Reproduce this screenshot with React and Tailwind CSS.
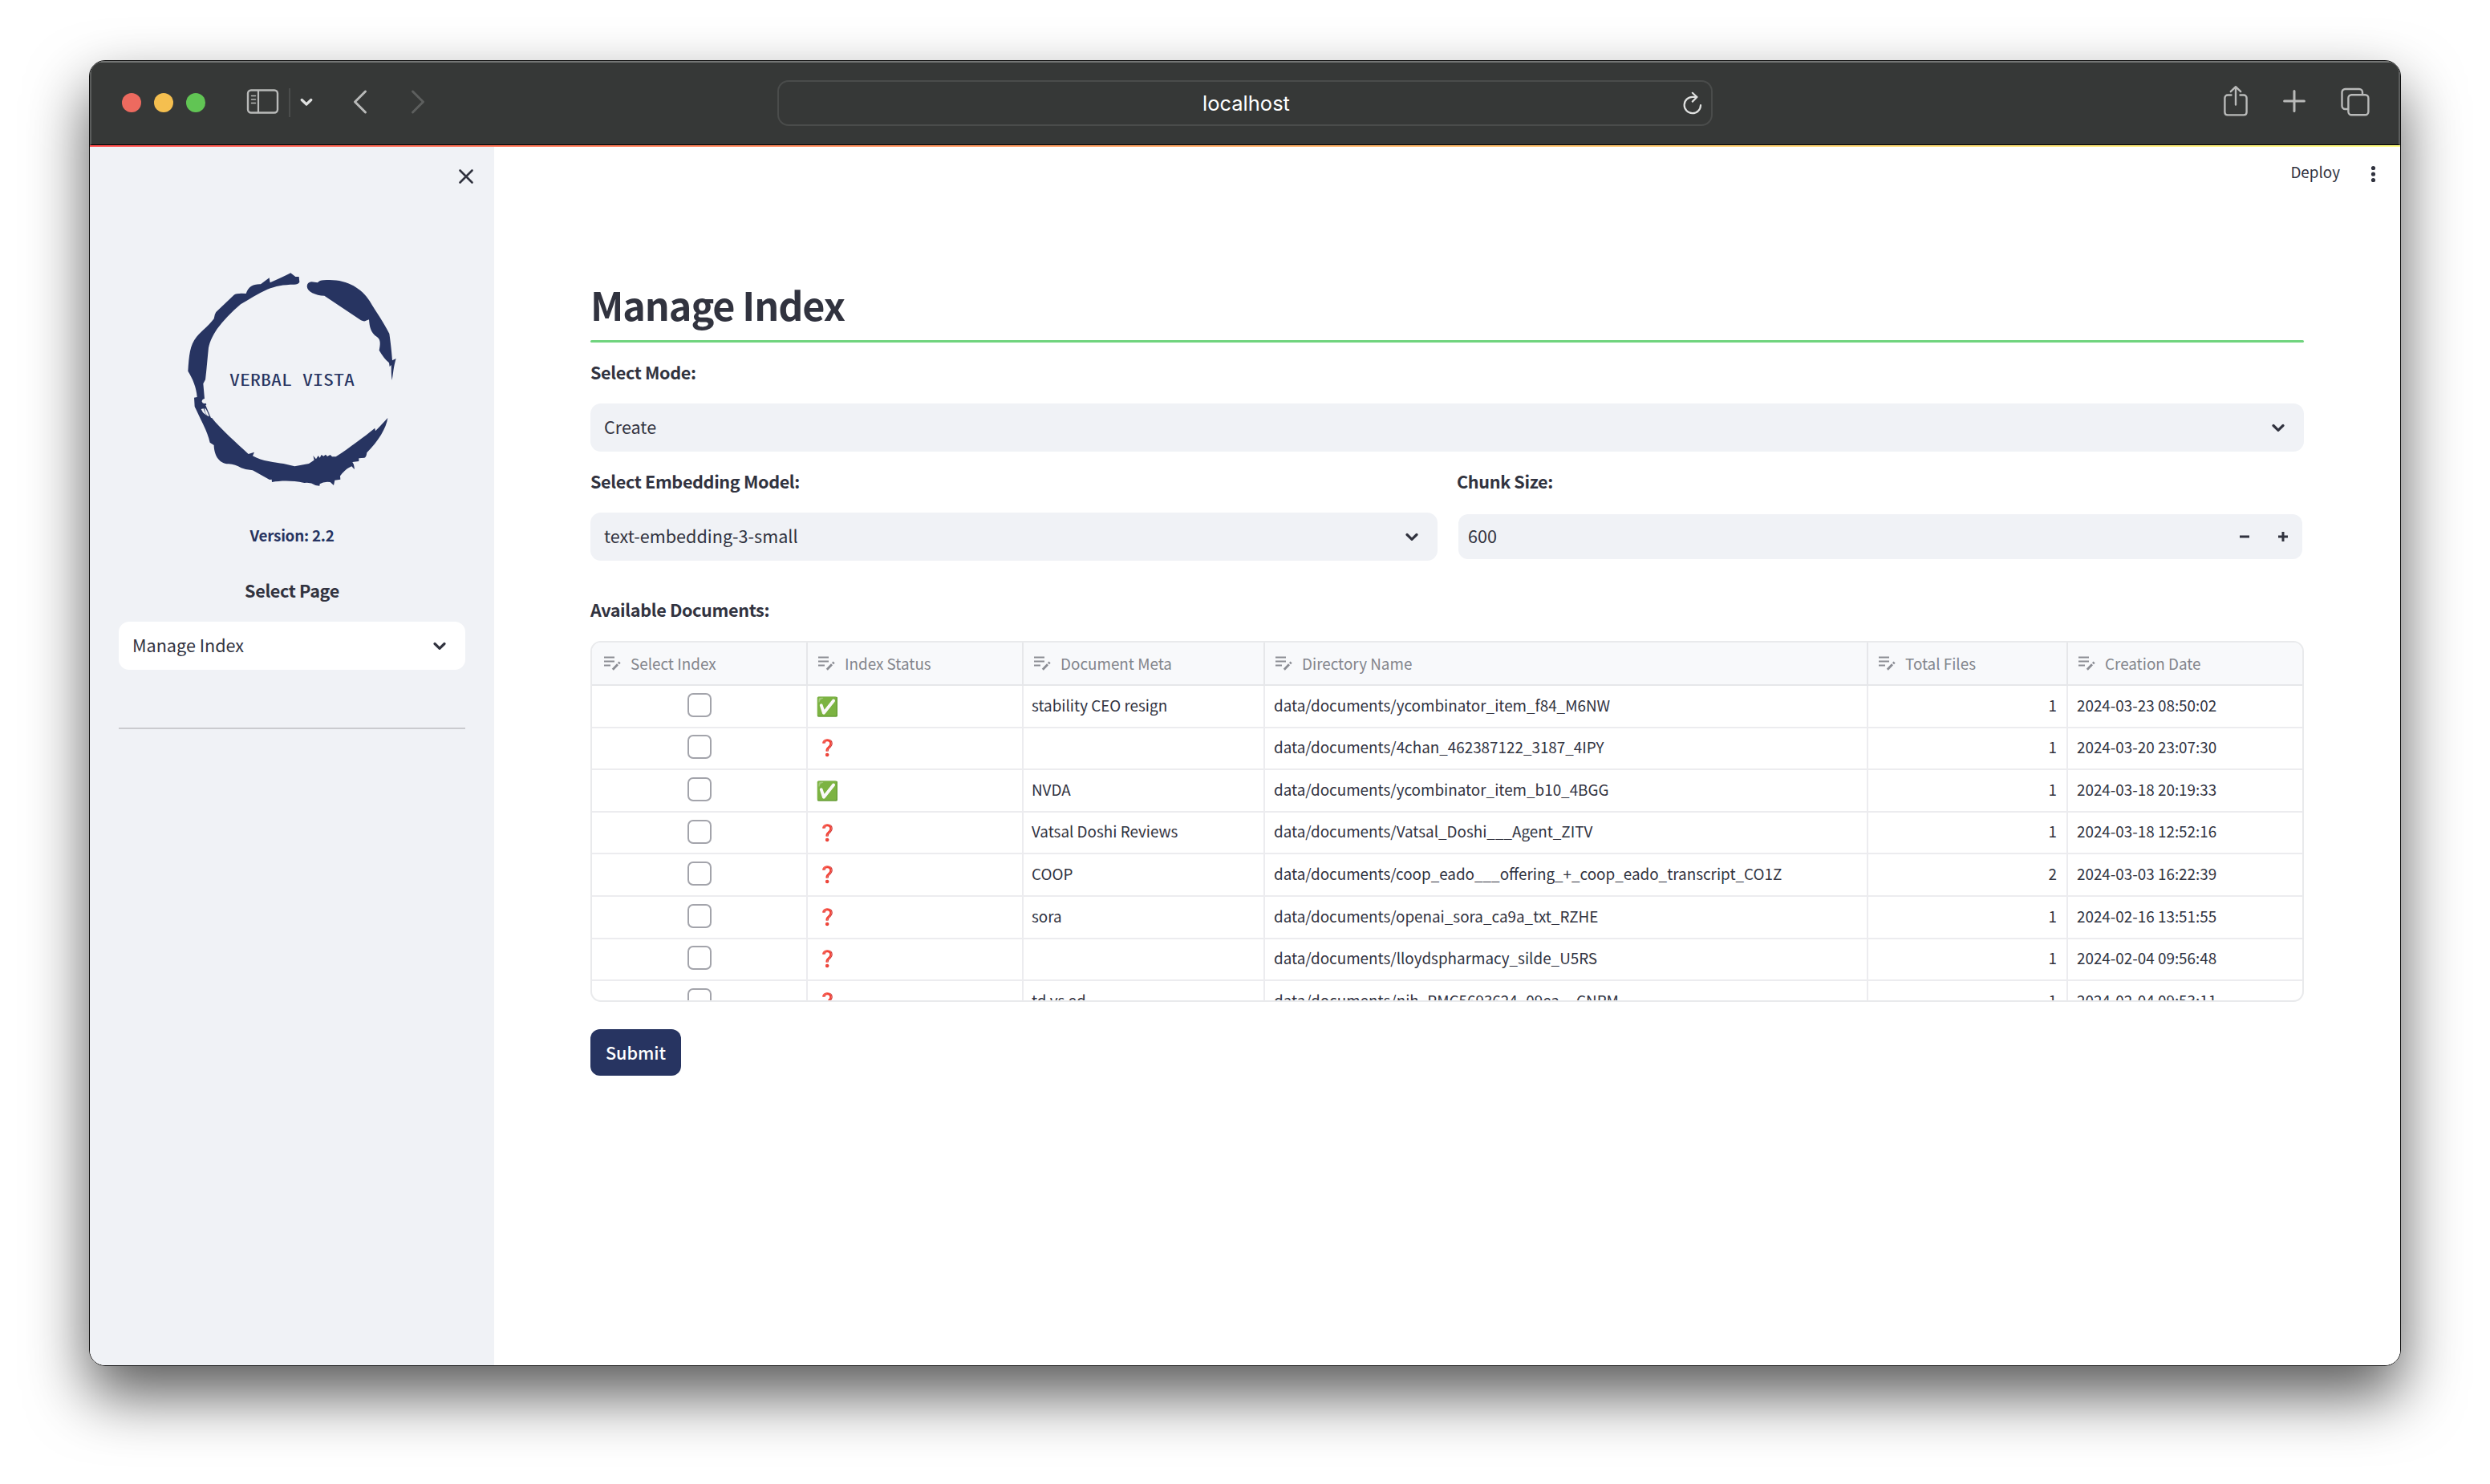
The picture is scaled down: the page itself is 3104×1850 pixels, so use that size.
const COLS =
  "grid grid-cols-[269px_269px_301px_752px_249px_minmax(0,1fr)]";

const HEADERS = [
  "Select Index",
  "Index Status",
  "Document Meta",
  "Directory Name",
  "Total Files",
  "Creation Date",
];

const ROWS = [
  ["✅", "stability CEO resign", "data/documents/ycombinator_item_f84_M6NW", 1, "2024-03-23 08:50:02"],
  ["❓", "", "data/documents/4chan_462387122_3187_4IPY", 1, "2024-03-20 23:07:30"],
  ["✅", "NVDA", "data/documents/ycombinator_item_b10_4BGG", 1, "2024-03-18 20:19:33"],
  ["❓", "Vatsal Doshi Reviews", "data/documents/Vatsal_Doshi___Agent_ZITV", 1, "2024-03-18 12:52:16"],
  ["❓", "COOP", "data/documents/coop_eado___offering_+_coop_eado_transcript_CO1Z", 2, "2024-03-03 16:22:39"],
  ["❓", "sora", "data/documents/openai_sora_ca9a_txt_RZHE", 1, "2024-02-16 13:51:55"],
  ["❓", "", "data/documents/lloydspharmacy_silde_U5RS", 1, "2024-02-04 09:56:48"],
  ["❓", "td vs ed", "data/documents/nih_PMC5693624_09ea__CNRM", 1, "2024-02-04 09:53:11"],
];

function Chevron({ className }) {
  return (
    <svg className={className} width="16" height="11" viewBox="0 0 16 11" fill="none">
      <path d="M2 2.5 8 8.3 14 2.5" stroke="#31333f" strokeWidth="3.2" strokeLinecap="round" strokeLinejoin="round" />
    </svg>
  );
}

function EditIcon() {
  return (
    <svg width="22" height="20" viewBox="0 0 22 20" fill="none" stroke="#8b8d94">
      <path d="M1 2.5h13M1 7.5h13M1 12.5h8" strokeWidth="1.8" />
      <path d="M11.8 17.8 18 11.2" strokeWidth="2.8" />
      <path d="M19 10.2 20.6 8.5" strokeWidth="2.8" />
    </svg>
  );
}

function Toolbar() {
  return (
    <header className="flex h-[105px] shrink-0 items-start border-x-2 border-t-2 border-b border-x-[#5c5e5d] border-t-[#737574] border-b-black bg-[#363837]">
      <div className="mt-[38px] ml-[38px] flex gap-4">
        <span className="size-6 rounded-full bg-[#ed6a5f]" />
        <span className="size-6 rounded-full bg-[#f5bf4f]" />
        <span className="size-6 rounded-full bg-[#61c554]" />
      </div>
      <svg className="mt-[31px] ml-[51px]" width="41" height="36" viewBox="0 0 41 36" fill="none" stroke="#b9bab9">
        <rect x="2" y="3.5" width="37" height="28" rx="4" strokeWidth="2.4" />
        <path d="M15 3.5v28" strokeWidth="2.2" />
        <path d="M6.5 10.5h5M6.5 15h5M6.5 19.5h5" strokeWidth="1.5" strokeLinecap="round" />
      </svg>
      <span className="mt-8 ml-[12px] h-9 w-[2px] bg-[#4b4d4c]" />
      <svg className="mt-[43px] ml-[12px]" width="16" height="13" viewBox="0 0 16 13" fill="none">
        <path d="M2.2 3.5 8 9 13.8 3.5" stroke="#e0e1e0" strokeWidth="3.2" strokeLinecap="round" strokeLinejoin="round" />
      </svg>
      <svg className="mt-[33px] ml-[49px]" width="20" height="32" viewBox="0 0 20 32" fill="none">
        <path d="M16.5 3 3.5 16l13 13" stroke="#b9bab9" strokeWidth="3" strokeLinecap="round" strokeLinejoin="round" />
      </svg>
      <svg className="mt-[33px] ml-[52px]" width="20" height="32" viewBox="0 0 20 32" fill="none">
        <path d="M3.5 3l13 13-13 13" stroke="#5d5f5e" strokeWidth="3" strokeLinecap="round" strokeLinejoin="round" />
      </svg>
      <div className="mt-[22px] ml-[438px] flex h-[57px] w-[1166px] items-center rounded-[14px] border-2 border-[#4a4c4b] pr-[11px] pl-[38px]">
        <span className="flex-1 text-center font-['Inter',sans-serif] text-[25.5px] leading-8 text-white">localhost</span>
        <svg width="24" height="30" viewBox="0 0 24 30" fill="none" stroke="#dfe0df" strokeWidth="2.2" strokeLinecap="round" strokeLinejoin="round">
          <path d="M22 17.2a10.2 10.2 0 1 1-10-10.4h5.2" />
          <path d="M11.8 1.8 17.4 7l-5.6 5.6" />
        </svg>
      </div>
      <svg className="mt-[27px] ml-[636px]" width="32" height="40" viewBox="0 0 32 40" fill="none" stroke="#b9bab9" strokeWidth="2.4" strokeLinecap="round" strokeLinejoin="round">
        <path d="M10.5 13.5H6A3.6 3.6 0 0 0 2.4 17v18A3.6 3.6 0 0 0 6 38.4h20a3.6 3.6 0 0 0 3.6-3.4V17a3.6 3.6 0 0 0-3.6-3.5h-4.500" />
        <path d="M16 25.500V3.500M9.800 9.200 16 3.200l6.200 6" />
      </svg>
      <svg className="mt-[34px] ml-[43px]" width="28" height="28" viewBox="0 0 28 28" fill="none">
        <path d="M14 1.600v24.800M1.600 14h24.800" stroke="#b9bab9" strokeWidth="3" strokeLinecap="round" />
      </svg>
      <svg className="mt-[30px] ml-[43px]" width="38" height="38" viewBox="0 0 38 38" fill="none" stroke="#b9bab9" strokeWidth="2.4">
        <rect x="10.400" y="10.200" width="25" height="25" rx="4" />
        <path d="M10 28H6.500a4 4 0 0 1-4-4V7a4 4 0 0 1 4-4H24a4 4 0 0 1 4 4v3" />
      </svg>
    </header>
  );
}

function Logo() {
  return (
    <svg className="mt-[137px] ml-[98px] block" width="310" height="310" viewBox="0 0 930 930" fill="#273461">
      <path d="M488 75 490 95Q485 104 470 104C430 104 400 110 370 122 335 138 300 160 270 178 235 207 205 240 182 270 162 300 151 325 149 350 145 390 142 430 138 460L130 475 135 531Q125 533 125 542 128 551 140 548L160 600C200 650 250 692 299 738L321 731 315 745C350 765 400 770 430 774L472 784 525 774Q540 765 545 760L541 744 552 757 560 744 566 752 572 741 580 746 588 740 594 747 605 741 612 748 626 748C680 712 730 675 772 641L774 652 790 635 820 603C815 640 785 690 742 733Q740 750 733 752L712 754V765L688 768Q697 780 695 795L685 784C665 792 650 810 642 820L643 833 622 836 618 855 605 843Q580 840 566 850L565 857 550 855Q530 842 508 846C460 836 420 838 387 843L386 833 378 834 315 799Q290 798 272 790 250 776 225 775C185 775 170 735 170 705L155 695C145 650 120 610 98 560L96 527 107 525C105 490 90 455 73 428 77 370 80 330 105 300 125 275 150 260 170 232Q172 215 178 207L245 143Q255 135 290 138C300 112 315 102 345 103L377 79 380 97Q430 75 457 61L475 75Z" />
      <path d="M518 110Q520 95 535 94L558 97Q565 88 580 88C660 80 720 115 752 165 775 205 805 245 826 288 832 330 835 360 837 388L851 381C842 410 840 440 836 462 832 440 834 420 833 405L827 411 825 397Q805 380 788 350C792 330 795 310 780 300 755 285 752 260 750 235L735 241Q728 242 720 238L583 146C550 145 518 130 518 110Z" />
      <path d="M122 570 131 568Q136 583 143 594L129 583ZM137 566 144 577 153 598 144 594Q136 580 135 570ZM143 552 163 602 159 603 139 556Z" fill="#f0f2f6" />
    </svg>
  );
}

function Sidebar() {
  return (
    <aside className="flex w-[504px] shrink-0 flex-col bg-[#f0f2f6]">
      <div className="flex h-0 justify-end">
        <svg className="mt-[27px] mr-[25px]" width="20" height="20" viewBox="0 0 20 20" fill="none">
          <path d="M2.500 2.500 17.500 17.500M17.500 2.500 2.500 17.500" stroke="#31333f" strokeWidth="2.600" strokeLinecap="round" />
        </svg>
      </div>
      <div className="relative">
        <Logo />
        <span className="absolute top-[274px] left-0 w-full scale-x-[1.3] text-center font-['Noto_Sans_Mono_CJK_SC','DejaVu_Sans_Mono',monospace] text-[20px] leading-8 font-medium text-[#273461]">VERBAL VISTA</span>
      </div>
      <p className="mt-[21px] text-center text-[18.85px] leading-8 font-bold tracking-[-0.25px] text-[#273461]">Version: 2.2</p>
      <p className="mt-[37px] text-center text-[21.6px] leading-8 font-bold tracking-[-0.36px]">Select Page</p>
      <div className="mx-9 mt-[23px] flex h-[60px] items-center justify-between rounded-[13px] bg-white pr-6 pb-px pl-[17px] text-[21.6px]">
        <span>Manage Index</span>
        <Chevron className="mt-px" />
      </div>
      <div className="mx-9 mt-[72px] h-[2px] bg-[#cacbcf]" />
    </aside>
  );
}

function Select({ children }) {
  return (
    <div className="flex h-[60px] items-center justify-between rounded-[13px] bg-[#f0f2f6] pr-6 pb-px pl-[17px] text-[21.6px]">
      <span>{children}</span>
      <Chevron className="mt-px" />
    </div>
  );
}

function Label({ children }) {
  return <p className="text-[21.6px] leading-8 font-bold tracking-[-0.36px]">{children}</p>;
}

function Table() {
  const cell = "flex items-center border-r-2 border-[#ececef] pb-[3px] whitespace-nowrap";
  return (
    <div className="mt-[23px] h-[450px] w-[2136px] overflow-hidden rounded-[13px] border-2 border-[#e9eaec] text-[18.85px]">
      <div className={`${COLS} h-[54px] border-b-2 border-[#e6e7ea] bg-[#f8f9fb] text-[#83858c]`}>
        {HEADERS.map((h, i) => (
          <div key={h} className={`flex items-center gap-3 border-[#e6e7ea] ${i === 0 ? "pl-[14px]" : "pl-3"} ${i < 5 ? "border-r-2" : ""}`}>
            <EditIcon />
            <span>{h}</span>
          </div>
        ))}
      </div>
      {ROWS.map((r) => (
        <div key={r[2]} className={`${COLS} h-[52.6px] border-b-2 border-[#ececef]`}>
          <div className={`${cell} justify-center`}>
            <span className="size-[30px] rounded-[7px] border-2 border-[#a3a4ab] bg-white" />
          </div>
          <div className={`${cell} pl-[10px]`}>
            <span className={`w-7 text-center ${r[0] === "✅" ? "text-[23px]" : "text-[20px]"}`}>{r[0]}</span>
          </div>
          <div className={`${cell} pl-[10px]`}>{r[1]}</div>
          <div className={`${cell} pl-[11px]`}>{r[2]}</div>
          <div className={`${cell} justify-end pr-3`}>{r[3]}</div>
          <div className="flex items-center pb-[3px] pl-[11px] whitespace-nowrap">{r[4]}</div>
        </div>
      ))}
    </div>
  );
}

function Main() {
  return (
    <main className="flex flex-1 flex-col bg-white">
      <div className="flex h-16 items-center justify-end pr-[30px]">
        <span className="mr-[38px] pb-[2px] text-[18.85px]">Deploy</span>
        <svg className="mt-[4px]" width="7" height="22" viewBox="0 0 7 22" fill="#31333f">
          <circle cx="3.500" cy="3.500" r="2.600" />
          <circle cx="3.500" cy="11" r="2.600" />
          <circle cx="3.500" cy="18.500" r="2.600" />
        </svg>
      </div>
      <div className="mt-[102px] ml-[120px] w-[2136px]">
        <h1 className="text-[48.500px] leading-[60px] font-bold tracking-[-1.1px]">Manage Index</h1>
        <div className="mt-[15px] h-[3px] rounded-full bg-[#70d47e]" />
        <div className="mt-[21px] mb-[23px]"><Label>Select Mode:</Label></div>
        <Select>Create</Select>
        <div className="mt-[21px] flex gap-6">
          <div className="w-[1056px]">
            <div className="mb-[23px]"><Label>Select Embedding Model:</Label></div>
            <Select>text-embedding-3-small</Select>
          </div>
          <div className="flex-1">
            <div className="mb-[25px]"><Label>Chunk Size:</Label></div>
            <div className="mx-[2px] flex h-14 items-center rounded-[12px] bg-[#f0f2f6] pr-[17px] pb-px pl-3 text-[21.6px]">
              <span className="flex-1">600</span>
              <svg className="mr-[34px]" width="14" height="14" viewBox="0 0 14 14">
                <path d="M1 7h12" stroke="#31333f" strokeWidth="3" />
              </svg>
              <svg width="14" height="14" viewBox="0 0 14 14">
                <path d="M1 7h12M7 1v12" stroke="#31333f" strokeWidth="3" />
              </svg>
            </div>
          </div>
        </div>
        <div className="mt-[45px]"><Label>Available Documents:</Label></div>
        <Table />
        <button className="mt-[34px] h-[58px] w-[113px] rounded-[12px] bg-[#273461] text-[21.6px] leading-[58px] font-medium text-white">Submit</button>
      </div>
    </main>
  );
}

export default function App() {
  return (
    <div className="h-[1850px] w-[3104px] overflow-hidden bg-white pt-[75px] pl-[111px] font-['Noto_Sans_CJK_SC','Noto_Sans',sans-serif] text-[#31333f]">
      <div className="flex h-[1628px] w-[2882px] flex-col overflow-hidden rounded-[20px] border border-[#0c0c0c] shadow-[0_36px_76px_rgba(0,0,0,0.65)]">
        <Toolbar />
        <div className="h-[2px] shrink-0 bg-linear-to-r from-[#ff4b4b] to-[#fffd80]" />
        <div className="flex flex-1">
          <Sidebar />
          <Main />
        </div>
      </div>
    </div>
  );
}
